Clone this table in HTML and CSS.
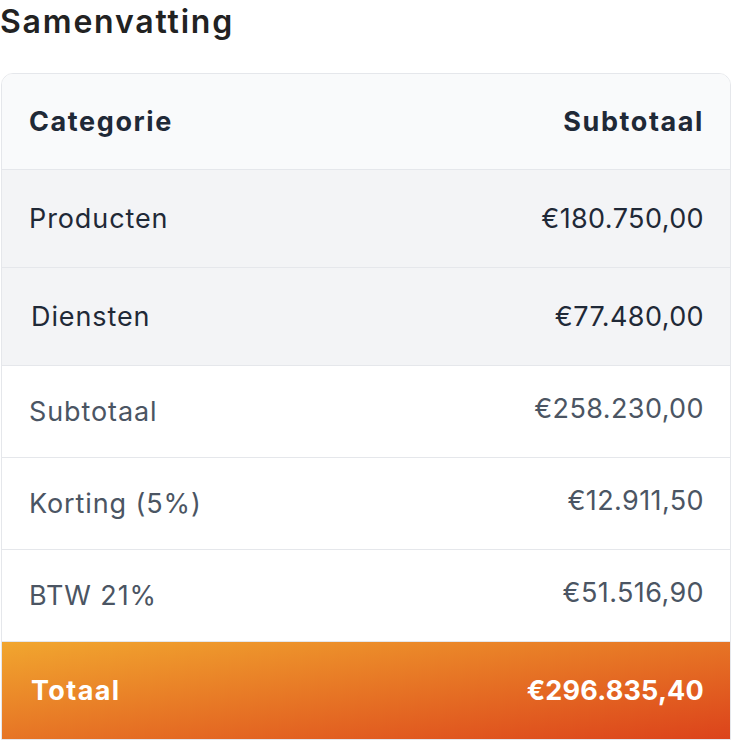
FILE: index.html
```html
<!DOCTYPE html>
<html lang="nl">
<head>
<meta charset="utf-8">
<title>Samenvatting</title>
<link rel="stylesheet" href="styles.css">
</head>
<body>
<section class="summary">
  <h2 class="summary-title">Samenvatting</h2>
  <div class="card">
    <div class="row row-head">
      <span class="label">Categorie</span>
      <span class="label">Subtotaal</span>
    </div>
    <div class="row row-cat">
      <span class="label">Producten</span>
      <span class="val">€180.750,00</span>
    </div>
    <div class="row row-cat">
      <span class="label indent">Diensten</span>
      <span class="val">€77.480,00</span>
    </div>
    <div class="row row-sum">
      <span class="label">Subtotaal</span>
      <span class="val">€258.230,00</span>
    </div>
    <div class="row row-sum">
      <span class="label">Korting (5%)</span>
      <span class="val">€12.911,50</span>
    </div>
    <div class="row row-sum">
      <span class="label">BTW 21%</span>
      <span class="val">€51.516,90</span>
    </div>
    <div class="row row-total">
      <span class="label indent">Totaal</span>
      <span class="val">€296.835,40</span>
    </div>
  </div>
</section>
</body>
</html>
```

FILE: styles.css
```css
html, body {
  margin: 0;
  padding: 0;
  background: #ffffff;
}
body {
  font-family: Inter, "Noto Sans", sans-serif;
  color: #1f2937;
}
.summary-title {
  margin: 0;
  padding: 2px 0 0 0;
  height: 73px;
  box-sizing: border-box;
  font-size: 32px;
  font-weight: 600;
  letter-spacing: 1.8px;
  color: #222222;
  line-height: 40px;
}
.card {
  margin-left: 1px;
  width: 730px;
  box-sizing: border-box;
  border: 1px solid #e5e7eb;
  border-radius: 12px 12px 0 0;
  overflow: hidden;
}
.row {
  display: flex;
  justify-content: space-between;
  align-items: center;
  padding: 0 26px 0 27px;
  border-bottom: 1px solid #e5e7eb;
  font-size: 27px;
}
.label {
  letter-spacing: 0.9px;
}
.val {
  letter-spacing: 0.4px;
}
.row-head {
  height: 95px;
  background: #f9fafb;
  font-weight: 700;
  color: #1f2937;
}
.row-head .label {
  letter-spacing: 1.6px;
}
.row-cat {
  height: 97px;
  background: #f3f4f6;
  color: #1f2937;
}
.row-sum {
  height: 91px;
  background: #ffffff;
  color: #4b5563;
}
.row-sum .val {
  margin-top: -6px;
}
.row-total {
  height: 97px;
  border-bottom: none;
  background: linear-gradient(to bottom right, #f1a62f, #dc431b);
  color: #ffffff;
  font-weight: 700;
}
.row-total .label {
  letter-spacing: 1.4px;
}
.row-total .val {
  letter-spacing: 0.2px;
}
.indent {
  margin-left: 2px;
}
```
